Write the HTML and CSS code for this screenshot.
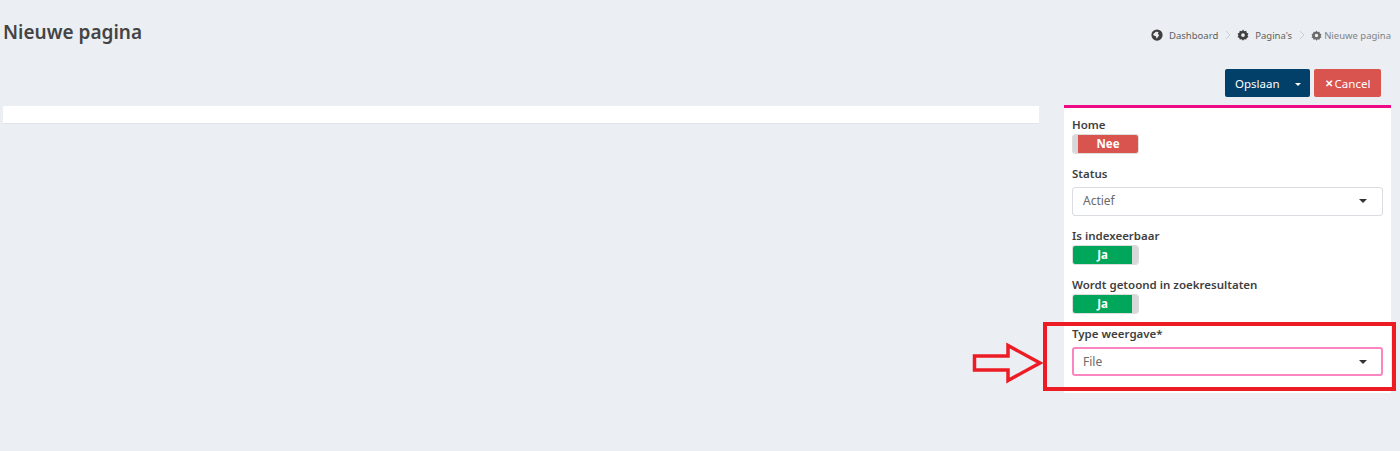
FILE: index.html

```html
<!DOCTYPE html>
<html>
<head>
    <title>Nieuwe pagina</title>
    <meta charset="UTF-8">
    <meta name="viewport" content="width=device-width, initial-scale=1.0">
    <link rel="stylesheet" href="styles.css">
</head>
<body>
    <div class="page-head">
        <h1>Nieuwe pagina</h1>
        <ul class="crumbs">
            <li>
                <svg class="crumb-icon" viewBox="0 0 16 16"><circle cx="8" cy="8" r="7.5" fill="#3f3f3f"/><path d="M3 6.5 L6.5 3.5 L10 4 L9 6.5 L11 8 L9 11 L7.5 13 L6.5 9.5 L3.5 8.5 Z" fill="#ebeef3"/></svg>
                <span class="crumb-link">Dashboard</span>
            </li>
            <li class="sep"><svg viewBox="0 0 6 10"><path d="M1 1 L5 5 L1 9" fill="none" stroke="#c9ccd1" stroke-width="1"/></svg></li>
            <li>
                <svg class="crumb-icon" viewBox="0 0 16 16"><path d="M8 .8 L9.6 2.9 L12.3 2.4 L12.9 5 L15.3 6.3 L14 8.6 L15.3 10.6 L12.9 11.9 L12.3 14 L9.6 13.6 L8 15.5 L6.4 13.6 L3.7 14 L3.1 11.9 L.7 10.6 L2 8.6 L.7 6.3 L3.1 5 L3.7 2.4 L6.4 2.9 Z M8 5.6 A2.5 2.5 0 1 0 8 10.6 A2.5 2.5 0 1 0 8 5.6 Z" fill="#3f3f3f" fill-rule="evenodd"/></svg>
                <span class="crumb-link">Pagina's</span>
            </li>
            <li class="sep"><svg viewBox="0 0 6 10"><path d="M1 1 L5 5 L1 9" fill="none" stroke="#c9ccd1" stroke-width="1"/></svg></li>
            <li class="crumb-current">
                <svg class="crumb-icon" viewBox="0 0 16 16"><path d="M8 .8 L9.6 2.9 L12.3 2.4 L12.9 5 L15.3 6.3 L14 8.6 L15.3 10.6 L12.9 11.9 L12.3 14 L9.6 13.6 L8 15.5 L6.4 13.6 L3.7 14 L3.1 11.9 L.7 10.6 L2 8.6 L.7 6.3 L3.1 5 L3.7 2.4 L6.4 2.9 Z M8 5.6 A2.5 2.5 0 1 0 8 10.6 A2.5 2.5 0 1 0 8 5.6 Z" fill="#6b6b6b" fill-rule="evenodd"/></svg>
                <span>Nieuwe pagina</span>
            </li>
        </ul>
    </div>

    <div class="actions">
        <button class="btn btn-save">Opslaan<span class="caret caret-white"></span></button>
        <button class="btn btn-cancel"><span class="times">✕</span>Cancel</button>
    </div>

    <div class="content">
        <div class="main-card"></div>

        <div class="side-card">
            <div class="form-group">
                <label>Home</label>
                <div class="toggle toggle-off"><span class="knob"></span><span class="toggle-text">Nee</span></div>
            </div>
            <div class="form-group">
                <label class="select-label">Status</label>
                <div class="select"><span>Actief</span><span class="caret"></span></div>
            </div>
            <div class="form-group">
                <label>Is indexeerbaar</label>
                <div class="toggle toggle-on"><span class="toggle-text">Ja</span><span class="knob"></span></div>
            </div>
            <div class="form-group">
                <label>Wordt getoond in zoekresultaten</label>
                <div class="toggle toggle-on"><span class="toggle-text">Ja</span><span class="knob"></span></div>
            </div>
            <div class="form-group">
                <label class="select-label">Type weergave*</label>
                <div class="select select-focus"><span>File</span><span class="caret"></span></div>
            </div>

            <!-- annotation on top of the screenshot -->
            <div class="mark-box"></div>
            <svg class="mark-arrow" viewBox="0 0 72 42"><path d="M2.5 14 H36 V3.5 L68 21 L36 38.5 V28 H2.5 Z" fill="none" stroke="#ed1c24" stroke-width="3.5"/></svg>
        </div>
    </div>
</body>
</html>
```

FILE: styles.css

```css
body {
    font-family: "Noto Sans", Arial, sans-serif;
    margin: 0;
    height: 451px;
    overflow: hidden;
    background-color: #ebeef3;
    color: #3f3f3f;
}
.page-head {
    display: flex;
    justify-content: space-between;
    align-items: center;
    height: 65px;
    padding: 0 9px 0 3px;
}
h1 {
    margin: 0 0 2px;
    font-size: 19px;
    font-weight: 600;
    color: #444;
}
.crumbs {
    display: flex;
    align-items: center;
    gap: 6.5px;
    list-style: none;
    margin: 5px 0 0;
    padding: 0;
    font-size: 9.5px;
    color: #5f5f5f;
}
.crumbs li {
    display: flex;
    align-items: center;
}
.crumb-icon {
    width: 12px;
    height: 12px;
    margin-right: 6px;
}
.crumb-current {
    color: #828282;
}
.crumb-current .crumb-icon {
    width: 11px;
    height: 11px;
    margin-right: 2px;
}
.sep svg {
    width: 6px;
    height: 10px;
    display: block;
}
.actions {
    display: flex;
    justify-content: flex-end;
    gap: 4px;
    padding: 4px 19px 0 0;
    height: 32px;
}
.btn {
    height: 28px;
    border: none;
    border-radius: 2px;
    color: #fff;
    font-family: inherit;
    font-size: 11.5px;
    padding: 0;
    display: flex;
    align-items: center;
}
.btn-save {
    width: 85px;
    padding-left: 10px;
    background-color: #023f69;
    position: relative;
}
.btn-save .caret {
    position: absolute;
    right: 9px;
    top: 14px;
}
.btn-cancel {
    width: 67px;
    justify-content: center;
    background-color: #d9534f;
}
.times {
    font-size: 10px;
    font-weight: bold;
    margin-right: 2px;
}
.caret {
    width: 0;
    height: 0;
    border-left: 4px solid transparent;
    border-right: 4px solid transparent;
    border-top: 4px solid #333;
}
.btn-save .caret-white {
    border-left-width: 3px;
    border-right-width: 3px;
    border-top: 3px solid #fff;
}
.content {
    display: flex;
    align-items: flex-start;
    padding: 4px 9px 0 3px;
}
.main-card {
    width: 1036px;
    height: 18px;
    background-color: #fff;
    margin-top: 1px;
    border-bottom: 1px solid #e0e4ea;
    box-sizing: border-box;
}
.side-card {
    position: relative;
    width: 327px;
    height: 288px;
    margin-left: 25px;
    box-sizing: border-box;
    padding: 10px 8px 0;
    background-color: #fff;
    border-top: 3px solid #ee0a85;
}
.form-group {
    margin-bottom: 13px;
}
label {
    display: block;
    margin-bottom: 3px;
    font-size: 11.5px;
    font-weight: 600;
    line-height: 13px;
    color: #3f3f3f;
}
.select-label {
    margin-bottom: 7px;
}
.toggle {
    display: flex;
    width: 67px;
    height: 20px;
    box-sizing: border-box;
    border: 1px solid #ddd;
    border-radius: 3px;
    overflow: hidden;
    font-size: 11.5px;
    font-weight: bold;
    color: #fff;
}
.toggle-text {
    flex: 1;
    text-align: center;
    line-height: 17px;
}
.knob {
    width: 5px;
    background-color: #d8d8d8;
}
.toggle-on .knob {
    width: 6px;
}
.toggle-off .toggle-text {
    background-color: #d9534f;
}
.toggle-on .toggle-text {
    background-color: #00a65a;
}
.select {
    display: flex;
    justify-content: space-between;
    align-items: center;
    height: 29px;
    box-sizing: border-box;
    padding: 0 15px 2px 10px;
    background-color: #fff;
    border: 1px solid #d9dce1;
    border-radius: 3px;
    font-size: 12px;
    color: #6b6b6b;
}
.select-focus {
    border: 2px solid #fb85c0;
    padding: 0 14px 0 9px;
}
.mark-box {
    position: absolute;
    left: -21px;
    top: 214px;
    width: 353px;
    height: 69px;
    box-sizing: border-box;
    border: 4px solid #ed1c24;
}
.mark-arrow {
    position: absolute;
    left: -92px;
    top: 234px;
    width: 72px;
    height: 42px;
}
```
